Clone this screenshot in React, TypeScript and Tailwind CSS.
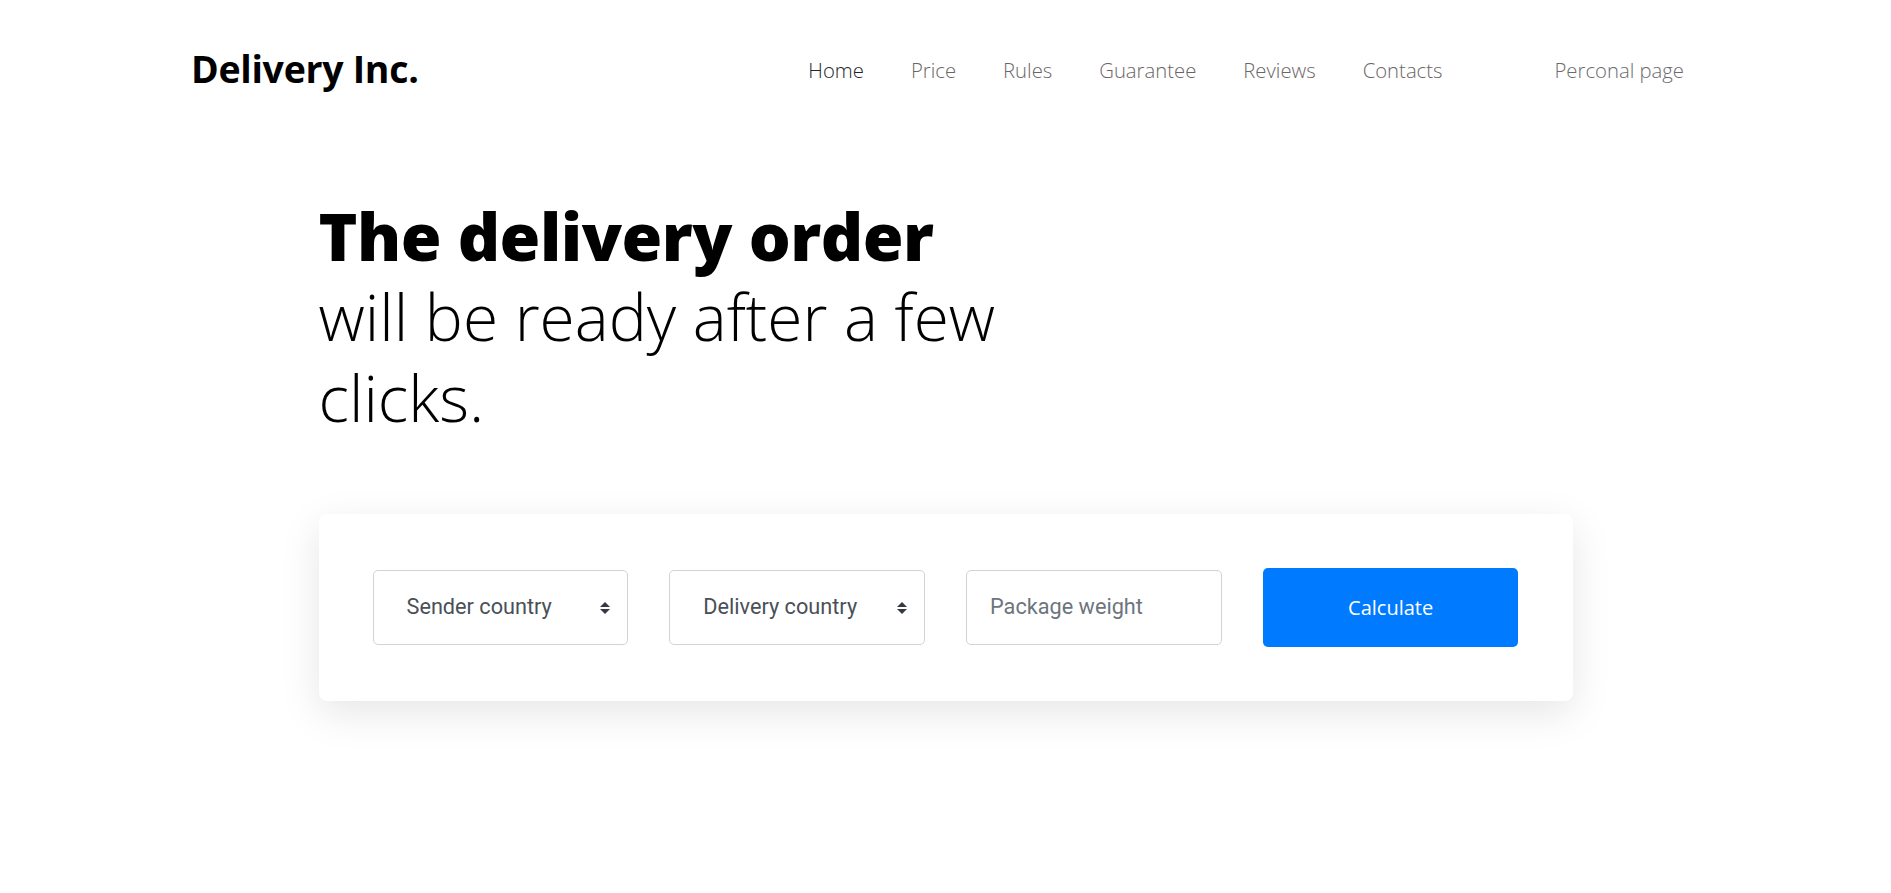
import React from "react";

function SortArrows() {
  return (
    <svg width="10" height="12" viewBox="0 0 10 12" className="shrink-0">
      <path d="M5 0 L10 5 L0 5 Z" fill="#343a40" />
      <path d="M5 12 L10 7 L0 7 Z" fill="#343a40" />
    </svg>
  );
}

export default function App() {
  const nav = ["Home", "Price", "Rules", "Guarantee", "Reviews", "Contacts"];
  return (
    <div className="min-h-screen bg-white">
      <header className="mx-auto w-[1509px] h-[140px] flex items-center justify-between">
        <div className="font-['Open_Sans',sans-serif] font-bold text-[37.5px] leading-none text-black tracking-[-0.3px] -mt-[2px]">
          Delivery Inc.
        </div>
        <nav className="flex items-center pr-4 font-['Open_Sans',sans-serif] font-light text-[20.3px] leading-none">
          <ul className="flex items-center gap-[47px]">
            {nav.map((n, i) => (
              <li key={n} className={i === 0 ? "text-[#212529]" : "text-[#6b6565]"}>
                {n}
              </li>
            ))}
          </ul>
          <span className="ml-[112px] text-[#6b6b70]">Perconal page</span>
        </nav>
      </header>

      <main className="mx-auto w-[1254px]">
        <h1 className="mt-[55px] font-['Open_Sans',sans-serif] text-black text-[66px] leading-[81px]">
          <span className="block font-extrabold tracking-[-0.5px]">The delivery order</span>
          <span className="block font-light text-[64px] w-[700px]">will be ready after a few clicks.</span>
        </h1>

        <div className="mt-[76px] rounded-lg bg-white shadow-[0_12px_40px_rgba(0,0,0,0.10)] px-[54px] py-[54px] flex items-center gap-[41px]">
          <div className="w-[256px] h-[75px] rounded-[5px] border border-[#ced4da] flex items-center justify-between pl-[33px] pr-[17px] font-['Roboto',sans-serif] text-[21.7px] text-[#495057]">
            <span>Sender country</span>
            <SortArrows />
          </div>
          <div className="w-[256px] h-[75px] rounded-[5px] border border-[#ced4da] flex items-center justify-between pl-[33px] pr-[17px] font-['Roboto',sans-serif] text-[21.7px] text-[#495057]">
            <span>Delivery country</span>
            <SortArrows />
          </div>
          <div className="w-[256px] h-[75px] rounded-[5px] border border-[#ced4da] flex items-center pl-[23px] font-['Roboto',sans-serif] text-[21.7px] text-[#6c757d]">
            <span>Package weight</span>
          </div>
          <button className="w-[256px] h-[79px] rounded-[5px] bg-[#007bff] text-white font-['Open_Sans',sans-serif] text-[20px] flex items-center justify-center">
            Calculate
          </button>
        </div>
      </main>
    </div>
  );
}
